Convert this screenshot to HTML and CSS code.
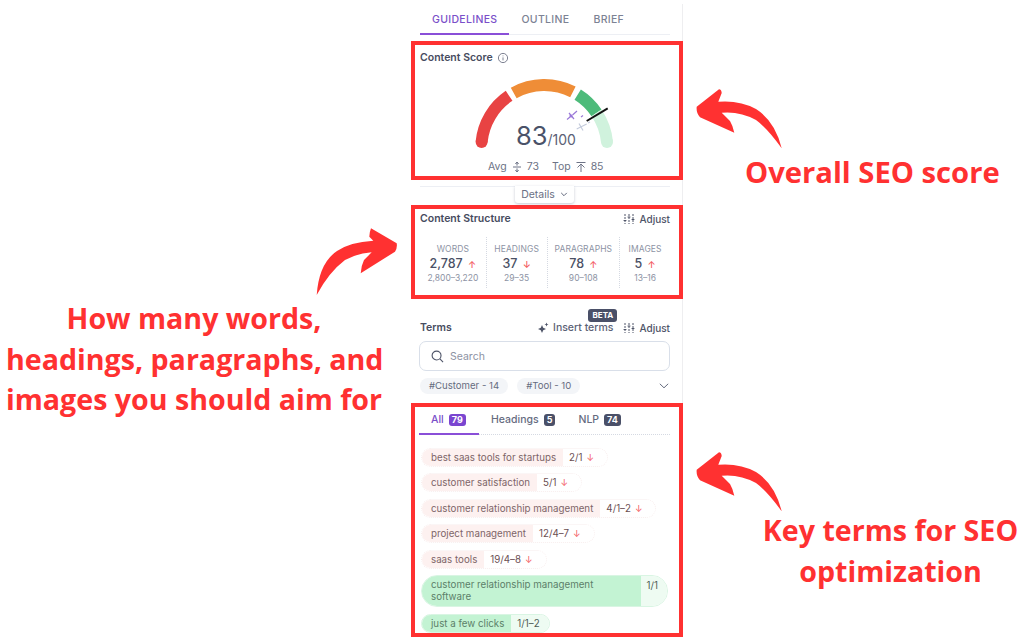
FILE: index.html
```html
<!DOCTYPE html>
<html>

<head>
    <meta charset="UTF-8">
    <meta name="viewport" content="width=device-width, initial-scale=1.0">
    <title>Content Score</title>
    <link rel="stylesheet" href="styles.css">
</head>

<body>
    <div class="panel">
        <!-- tabs -->
        <div class="tabs">
            <span class="tab tab-active">GUIDELINES</span>
            <span class="tab">OUTLINE</span>
            <span class="tab">BRIEF</span>
        </div>

        <!-- content score -->
        <div class="box box-score">
            <div class="box-title">Content Score
                <svg class="info" viewBox="0 0 12 12"><circle cx="6" cy="6" r="4.6" /><path d="M6 5.4v3M6 3.5v.8" /></svg>
            </div>
            <div class="gauge">
                <svg class="gauge-arc" viewBox="0 0 160 90">
                    <circle cx="16.6" cy="71" r="6" fill="#e84343" />
                    <circle cx="142" cy="71" r="6" fill="#d0f2dd" />
                    <path d="M16.6 71A63 63 0 0 1 44.1 24.8" stroke="#e84343" />
                    <path d="M48.7 21.9A63 63 0 0 1 107.9 20.9" stroke="#ef8d37" />
                    <path d="M112.7 23.6A63 63 0 0 1 131.5 41.8" stroke="#4dbb7a" />
                    <path d="M131.5 41.8A63 63 0 0 1 142 71" stroke="#d0f2dd" />
                    <path class="needle" d="M121.7 50L142.7 37.3" />
                    <path class="mark-purple" d="M102 48.5L105 46M107.5 44L112 40M104 42L109 48M116 46L118 44.5" />
                    <circle cx="106" cy="45" r="1.6" fill="#9a78d8" />
                    <path class="mark-grey" d="M111.7 58L121.7 53M114 52.5L118 59.5M123 52L125 51" />
                </svg>
                <div class="score"><span class="score-num">83</span><span class="score-max">/100</span></div>
            </div>
            <div class="score-meta">
                <span>Avg</span>
                <svg class="meta-icon" viewBox="0 0 10 12"><path d="M1 6h8M5 1v3.6M3.4 3L5 1l1.6 2M5 11V7.4M3.4 9L5 11l1.6-2" /></svg>
                <span class="meta-val">73</span>
                <span class="meta-top">Top</span>
                <svg class="meta-icon" viewBox="0 0 10 12"><path d="M0.5 1.5h9M5 11V3M1.5 6.5L5 3l3.5 3.5" /></svg>
                <span>85</span>
            </div>
        </div>

        <div class="details-row">
            <div class="details">Details
                <svg class="chev" viewBox="0 0 10 6"><path d="M1.5 1L5 4.5 8.5 1" /></svg>
            </div>
        </div>

        <!-- content structure -->
        <div class="box box-structure">
            <div class="box-head">
                <span class="box-title">Content Structure</span>
                <span class="adjust">
                    <svg class="sliders" viewBox="0 0 12 12"><path d="M2 1v10M6 1v10M10 1v10" stroke-dasharray="2 1" /><path d="M.6 7.5h2.8M4.6 4h2.8M8.6 6.5h2.8" /></svg>
                    Adjust
                </span>
            </div>
            <div class="stats">
                <div class="stat stat-words">
                    <div class="stat-label">WORDS</div>
                    <div class="stat-value">2,787 <span class="up">↑</span></div>
                    <div class="stat-range">2,800–3,220</div>
                </div>
                <div class="stat stat-head">
                    <div class="stat-label">HEADINGS</div>
                    <div class="stat-value">37 <span class="up">↓</span></div>
                    <div class="stat-range">29–35</div>
                </div>
                <div class="stat stat-para">
                    <div class="stat-label">PARAGRAPHS</div>
                    <div class="stat-value">78 <span class="up">↑</span></div>
                    <div class="stat-range">90–108</div>
                </div>
                <div class="stat stat-img">
                    <div class="stat-label">IMAGES</div>
                    <div class="stat-value">5 <span class="up">↑</span></div>
                    <div class="stat-range">13–16</div>
                </div>
            </div>
        </div>

        <!-- terms -->
        <div class="terms">
            <div class="terms-head">
                <span class="terms-title">Terms</span>
                <span class="insert">
                    <span class="beta">BETA</span>
                    <svg class="spark" viewBox="0 0 12 12"><path d="M5 3l1.2 2.8L9 7 6.2 8.2 5 11 3.8 8.2 1 7l2.8-1.2zM9.5 .5l.6 1.4 1.4.6-1.4.6-.6 1.4-.6-1.4-1.400-.6 1.400-.6z" /></svg>
                    Insert terms
                </span>
                <span class="adjust">
                    <svg class="sliders" viewBox="0 0 12 12"><path d="M2 1v10M6 1v10M10 1v10" stroke-dasharray="2 1" /><path d="M.6 7.5h2.8M4.6 4h2.8M8.6 6.5h2.8" /></svg>
                    Adjust
                </span>
            </div>
            <div class="search">
                <svg class="search-icon" viewBox="0 0 14 14"><circle cx="6" cy="6" r="4.8" /><path d="M9.6 9.6L13 13" /></svg>
                Search
            </div>
            <div class="chips">
                <span class="chip">#Customer - 14</span>
                <span class="chip">#Tool - 10</span>
                <svg class="chips-chev" viewBox="0 0 10 6"><path d="M.8 .8L5 4.8 9.2 .8" /></svg>
            </div>
        </div>

        <!-- term list -->
        <div class="box box-list">
            <div class="subtabs">
                <span class="subtab subtab-active">All <b class="count count-purple">79</b></span>
                <span class="subtab">Headings <b class="count">5</b></span>
                <span class="subtab">NLP <b class="count">74</b></span>
            </div>
            <div class="pills">
                <div class="pill"><span class="pill-name">best saas tools for startups</span><span class="pill-num">2/1 <i>↓</i></span></div>
                <div class="pill"><span class="pill-name">customer satisfaction</span><span class="pill-num">5/1 <i>↓</i></span></div>
                <div class="pill"><span class="pill-name">customer relationship management</span><span class="pill-num">4/1–2 <i>↓</i></span></div>
                <div class="pill"><span class="pill-name">project management</span><span class="pill-num">12/4–7 <i>↓</i></span></div>
                <div class="pill"><span class="pill-name">saas tools</span><span class="pill-num">19/4–8 <i>↓</i></span></div>
                <div class="pill pill-good pill-wide"><span class="pill-name">customer relationship management software</span><span class="pill-num">1/1</span></div>
                <div class="pill pill-good"><span class="pill-name">just a few clicks</span><span class="pill-num">1/1–2</span></div>
            </div>
        </div>
    </div>

    <!-- annotations over the screenshot -->
    <svg class="arrow arrow-score" viewBox="0 0 100 80"><path d="M6.7 26.7L29 9.3Q31.5 9.5 31.7 13L28.3 21.7Q50 20 66 29Q85 41 91.7 68.3Q77 48 66 40Q50 31 31.7 32.7L40 41Q43 46 44.3 52.7L10 37.3Q6 33 6.7 26.7Z" /></svg>
    <svg class="arrow arrow-structure" viewBox="0 0 100 80"><path d="M86.7 23.3L61 8.3Q59.5 12 59.3 16.7L63.3 20.7Q40 22 27 31Q9 43 6.7 75Q19 52 35 40Q48 33 61.7 32.3L54 40Q51 46 50.7 53.3L85 31.7Q87.5 28 86.7 23.3Z" /></svg>
    <svg class="arrow arrow-terms" viewBox="0 0 100 80"><path d="M6.7 26.7L29 9.3Q31.5 9.5 31.7 13L28.3 21.7Q50 20 66 29Q85 41 91.7 68.3Q77 48 66 40Q50 31 31.7 32.7L40 41Q43 46 44.3 52.7L10 37.3Q6 33 6.7 26.7Z" /></svg>

    <div class="caption caption-score">Overall SEO score</div>
    <div class="caption caption-structure">How many words,<br>headings, paragraphs, and<br>images you should aim for</div>
    <div class="caption caption-terms">Key terms for SEO<br>optimization</div>
</body>

</html>
```

FILE: styles.css
```css
* {
    margin: 0;
    padding: 0;
    box-sizing: border-box;
}

body {
    font-family: 'Inter', 'Liberation Sans', sans-serif;
    background-color: #fff;
    color: #4a5065;
    height: 637px;
    overflow: hidden;
    position: relative;
}

.panel {
    width: 272px;
    margin-left: 411px;
    margin-top: 4px;
    display: flex;
    flex-direction: column;
    height: 633px;
    border-right: 1px solid #eeeef0;
}

/* tabs */
.tabs {
    height: 31px;
    margin: 0 12px 6px 9px;
    display: flex;
    border-bottom: 1px solid #edeff4;
    font-size: 10.5px;
    font-weight: 500;
    letter-spacing: .32px;
    color: #7c8294;
}

.tab {
    padding: 9px 12px 0;
}

.tab-active {
    color: #7a4fc9;
    border-bottom: 2px solid #8a4fd8;
    height: 31px;
}

/* red boxes */
.box {
    border: 4px solid #ff3131;
    flex-shrink: 0;
    margin-right: -1px;
}

.box-title {
    font-size: 10.5px;
    font-weight: 600;
    color: #474c60;
    display: flex;
    align-items: center;
    gap: 4px;
}

.box-score {
    height: 139px;
    padding: 6px 5px 0;
}

.info {
    width: 12px;
    height: 12px;
    fill: none;
    stroke: #6f7486;
    stroke-width: .9;
}

.gauge {
    position: relative;
    width: 160px;
    height: 90px;
    margin: 7px 0 0 45px;
}

.gauge-arc {
    width: 160px;
    height: 90px;
    display: block;
}

.gauge-arc path {
    fill: none;
    stroke-width: 12;
}

.gauge-arc .needle {
    stroke: #111;
    stroke-width: 2;
}

.gauge-arc .mark-purple {
    stroke: #9a78d8;
    stroke-width: 1.2;
}

.gauge-arc .mark-grey {
    stroke: #c4cbdc;
    stroke-width: 1.2;
}

.score {
    position: absolute;
    left: 51px;
    top: 49px;
    white-space: nowrap;
    color: #4a5268;
}

.score-num {
    font-size: 25.5px;
    font-weight: 400;
}

.score-max {
    font-size: 14px;
    color: #5b6175;
}

.score-meta {
    display: flex;
    align-items: center;
    gap: 3px;
    margin: -1px 0 0 68px;
    font-size: 10.5px;
    color: #6d7386;
}

.meta-icon {
    width: 10px;
    height: 12px;
    margin: 0 2px;
    fill: none;
    stroke: #6d7386;
    stroke-width: 1;
}

.meta-val {
    margin-right: 10px;
}

/* details button */
.details-row {
    height: 25px;
    margin: 0 12px 0 9px;
    position: relative;
    flex-shrink: 0;
}

.details-row::before {
    content: "";
    display: block;
    height: 1px;
    background-color: #edeff4;
    position: absolute;
    left: 0;
    right: 0;
    top: 6px;
}

.details {
    position: absolute;
    left: 95px;
    top: 6px;
    width: 59px;
    height: 17px;
    background-color: #fff;
    box-shadow: 0 1px 3px rgba(90, 100, 130, .35);
    border-radius: 0 0 3px 3px;
    font-size: 10.5px;
    color: #6a7084;
    display: flex;
    align-items: center;
    justify-content: center;
    gap: 5px;
}

.chev {
    width: 8px;
    height: 5px;
    fill: none;
    stroke: #5c6276;
    stroke-width: 1.2;
}

/* content structure */
.box-structure {
    height: 94px;
    padding: 1px 9px 0 5px;
}

.box-head {
    display: flex;
    justify-content: space-between;
    align-items: center;
    height: 17px;
}

.adjust {
    display: flex;
    align-items: center;
    gap: 4px;
    font-size: 10px;
    font-weight: 500;
    color: #4e5468;
}

.sliders {
    width: 12px;
    height: 12px;
    fill: none;
    stroke: #4e5468;
    stroke-width: 1;
}

.stats {
    display: flex;
    margin-top: 10px;
    text-align: center;
}

.stat {
    height: 51px;
    padding-top: 7px;
    border-right: 1px dotted #d5d9e2;
}

.stat-words {
    width: 67px;
}

.stat-head {
    width: 61px;
}

.stat-para {
    width: 73px;
}

.stat-img {
    width: 50px;
    border-right: 0;
}

.stat-label {
    font-size: 8.5px;
    color: #8d93a4;
    letter-spacing: .1px;
}

.stat-value {
    font-size: 12.5px;
    font-weight: 500;
    color: #4a5065;
    margin: 2px 0;
}

.up {
    color: #f3555a;
    font-size: 9.5px;
    margin-left: 2px;
}

.stat-range {
    font-size: 8.5px;
    color: #8d93a4;
}

/* terms */
.terms {
    height: 104px;
    padding: 0 12px 0 9px;
    flex-shrink: 0;
    position: relative;
}

.terms-head {
    display: flex;
    align-items: center;
    height: 17px;
    margin-top: 20px;
}

.terms-title {
    font-size: 10.5px;
    font-weight: 600;
    color: #474c60;
    margin-right: auto;
}

.insert {
    display: flex;
    align-items: center;
    gap: 4px;
    font-size: 10.5px;
    font-weight: 500;
    color: #5c6276;
    margin-right: 10px;
    position: relative;
}

.beta {
    position: absolute;
    right: -4px;
    top: -12px;
    width: 29px;
    height: 13px;
    background-color: #4a5068;
    color: #fff;
    border-radius: 3px;
    font-size: 8px;
    font-weight: 700;
    text-align: center;
    line-height: 13px;
}

.spark {
    width: 12px;
    height: 12px;
    fill: #4e5468;
}

.search {
    height: 30px;
    margin: 5px 0 0 -1px;
    border: 1px solid #d9dfe9;
    border-radius: 7px;
    display: flex;
    align-items: center;
    gap: 6px;
    padding-left: 11px;
    font-size: 10.5px;
    color: #8d93a4;
}

.search-icon {
    width: 13px;
    height: 13px;
    fill: none;
    stroke: #4e5468;
    stroke-width: 1.2;
}

.chips {
    display: flex;
    align-items: center;
    gap: 9px;
    margin-top: 7px;
    position: relative;
}

.chip {
    height: 16px;
    line-height: 16px;
    padding: 0 9px;
    border-radius: 8px;
    background-color: #f3f5f8;
    font-size: 9.6px;
    color: #666c7f;
}

.chips-chev {
    width: 10px;
    height: 6px;
    margin-left: auto;
    margin-right: 1px;
    fill: none;
    stroke: #666c7f;
    stroke-width: 1;
}

/* term list */
.box-list {
    height: 234px;
    padding: 0 9px 0 4px;
    overflow: hidden;
}

.subtabs {
    display: flex;
    height: 28px;
    border-bottom: 1px dotted #d5d9e2;
    font-size: 10.5px;
    font-weight: 500;
    color: #666c7f;
}

.subtab {
    padding: 6px 11px 0 12px;
    display: flex;
    gap: 5px;
    height: 28px;
}

.subtab-active {
    color: #7a4fc9;
    border-bottom: 2px solid #8a4fd8;
    width: 60px;
}

.count {
    font-size: 9px;
    font-weight: 700;
    color: #fff;
    background-color: #4a5068;
    border-radius: 3px;
    min-width: 11px;
    height: 12px;
    line-height: 12px;
    padding: 0 3px;
    text-align: center;
    margin-top: 1px;
}

.count-purple {
    background-color: #7a45d0;
}

.pills {
    display: flex;
    flex-direction: column;
    align-items: flex-start;
    gap: 6.5px;
    margin: 12.5px 0 0 2px;
}

.pill {
    display: flex;
    align-items: stretch;
    height: 19px;
    border: 1px dotted #f8eeee;
    border-radius: 10px;
    font-size: 9.75px;
    color: #7d6568;
    overflow: hidden;
}

.pill-name {
    background-color: #fdf1f0;
    padding: 0 7px 0 9px;
    display: flex;
    align-items: center;
}

.pill-num {
    padding: 0 13px 0 6px;
    display: flex;
    align-items: center;
    gap: 4px;
    color: #6b4f53;
}

.pill-num i {
    color: #f3555a;
    font-style: normal;
    font-size: 9px;
}

.pill-good {
    border: 1px solid #d9f5e3;
    color: #5c8069;
}

.pill-good .pill-name {
    background-color: #c3f3d3;
}

.pill-good .pill-num {
    background-color: #eefbf2;
    color: #4e5d55;
    padding: 0 9px 0 6px;
}

.pill-wide {
    width: 247px;
    height: 32px;
    border-radius: 16px;
}

.pill-wide .pill-name {
    width: 219px;
    padding-right: 30px;
    line-height: 12px;
}

.pill-wide .pill-num {
    flex: 1;
    align-items: flex-start;
    padding-top: 4px;
}

/* annotations */
.arrow {
    position: absolute;
    width: 100px;
    height: 80px;
    fill: #ff3131;
}

.arrow-score {
    left: 690px;
    top: 80px;
}

.arrow-structure {
    left: 310px;
    top: 220px;
}

.arrow-terms {
    left: 690px;
    top: 443px;
}

.caption {
    position: absolute;
    font-family: 'Open Sans', 'Liberation Sans', sans-serif;
    font-weight: 700;
    font-size: 28.6px;
    line-height: 40.5px;
    color: #ff3131;
    text-align: center;
    white-space: nowrap;
}

.caption-score {
    left: 745px;
    top: 152px;
    font-size: 29.2px;
}

.caption-structure {
    left: 6px;
    top: 298px;
    width: 376px;
}

.caption-terms {
    left: 762px;
    top: 510px;
    width: 257px;
}
```
